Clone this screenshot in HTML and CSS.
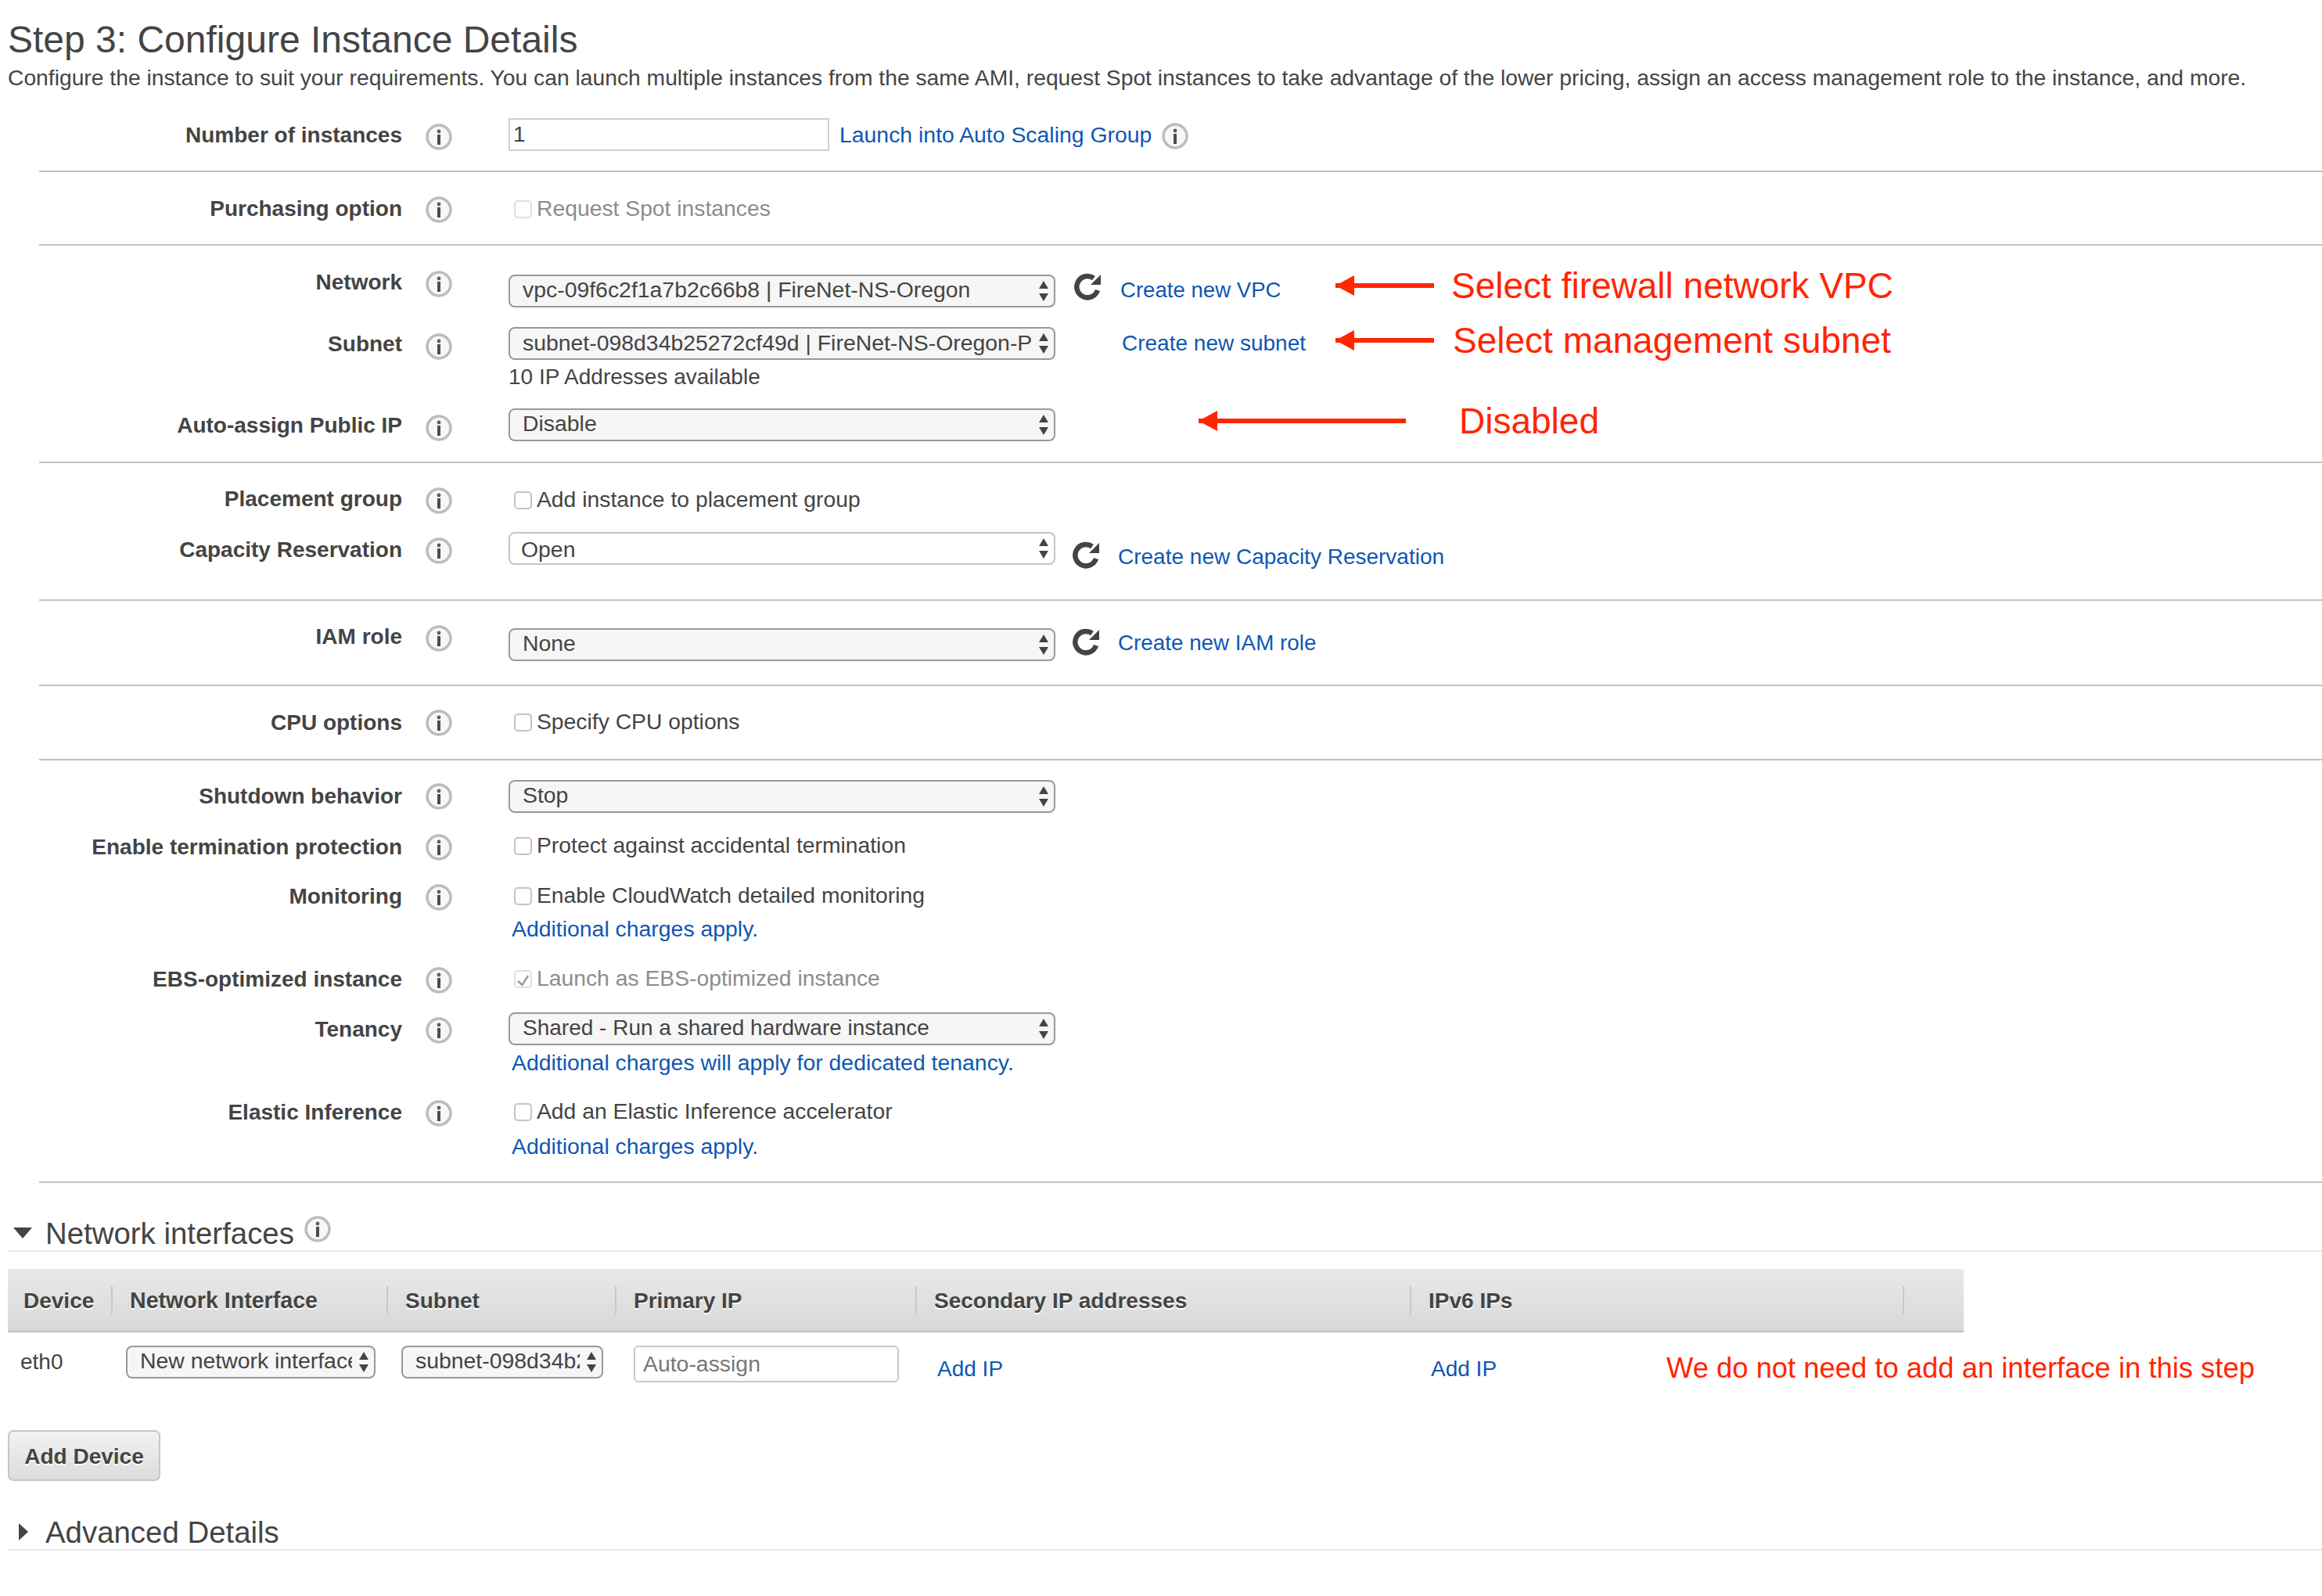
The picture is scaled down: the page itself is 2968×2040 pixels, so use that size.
FILE: index.html
```html
<!DOCTYPE html>
<html>
  <head>
    <title>Step 3: Configure Instance Details</title>
    <link rel="stylesheet" href="styles.css">
  </head>
  <body>
    <svg class="defs" width="0" height="0">
      <symbol id="info" viewBox="0 0 34 34">
        <circle cx="17" cy="17" r="15" fill="#f7f7f7" stroke="#bcbcbc" stroke-width="3.5"/>
        <circle cx="17" cy="10" r="2.4" fill="#5c5c5c"/>
        <rect x="15" y="14" width="4" height="13" fill="#4c4c4c"/>
      </symbol>
      <symbol id="refresh" viewBox="0 0 36 36">
        <path d="M31 22A13.7 13.7 0 1 1 26 6.500" fill="none" stroke="#444" stroke-width="6.500"/>
        <path d="M35 2V15H22z" fill="#444"/>
      </symbol>
    </svg>

    <div id="page">
      <header class="head">
        <h1>Step 3: Configure Instance Details</h1>
        <p>Configure the instance to suit your requirements. You can launch multiple instances from the same AMI, request Spot instances to take advantage of the lower pricing, assign an access management role to the instance, and more.</p>
      </header>

      <section class="group">
        <div class="row row-number">
          <label>Number of instances</label>
          <svg class="info"><use href="#info"/></svg>
          <div class="ctl">
            <div class="line">
              <input class="num" type="text" value="1">
              <a class="asg" href="#">Launch into Auto Scaling Group</a>
              <svg class="info asg-info"><use href="#info"/></svg>
            </div>
          </div>
        </div>
      </section>

      <section class="group">
        <div class="row row-purchase">
          <label>Purchasing option</label>
          <svg class="info"><use href="#info"/></svg>
          <div class="ctl">
            <div class="check off"><span class="box"></span>Request Spot instances</div>
          </div>
        </div>
      </section>

      <section class="group">
        <div class="row row-network">
          <label>Network</label>
          <svg class="info"><use href="#info"/></svg>
          <div class="ctl">
            <div class="line">
              <div class="select dark"><select><option>vpc-09f6c2f1a7b2c66b8 | FireNet-NS-Oregon</option></select></div>
              <svg class="refresh ref-vpc"><use href="#refresh"/></svg>
              <a class="link-vpc" href="#">Create new VPC</a>
            </div>
          </div>
        </div>
        <div class="row row-subnet">
          <label>Subnet</label>
          <svg class="info"><use href="#info"/></svg>
          <div class="ctl">
            <div class="line">
              <div class="select dark"><select><option>subnet-098d34b25272cf49d | FireNet-NS-Oregon-Public-1</option></select></div>
              <a class="link-subnet" href="#">Create new subnet</a>
            </div>
            <div class="avail">10 IP Addresses available</div>
          </div>
        </div>
        <div class="row row-auto">
          <label>Auto-assign Public IP</label>
          <svg class="info"><use href="#info"/></svg>
          <div class="ctl">
            <div class="select dark"><select><option>Disable</option></select></div>
          </div>
        </div>
      </section>

      <section class="group">
        <div class="row row-placement">
          <label>Placement group</label>
          <svg class="info"><use href="#info"/></svg>
          <div class="ctl">
            <div class="check"><span class="box"></span>Add instance to placement group</div>
          </div>
        </div>
        <div class="row row-capacity">
          <label>Capacity Reservation</label>
          <svg class="info"><use href="#info"/></svg>
          <div class="ctl">
            <div class="line">
              <div class="select light"><select><option>Open</option></select></div>
              <svg class="refresh ref-cap"><use href="#refresh"/></svg>
              <a class="link-cap" href="#">Create new Capacity Reservation</a>
            </div>
          </div>
        </div>
      </section>

      <section class="group">
        <div class="row row-iam">
          <label>IAM role</label>
          <svg class="info"><use href="#info"/></svg>
          <div class="ctl">
            <div class="line">
              <div class="select dark"><select><option>None</option></select></div>
              <svg class="refresh ref-iam"><use href="#refresh"/></svg>
              <a class="link-iam" href="#">Create new IAM role</a>
            </div>
          </div>
        </div>
      </section>

      <section class="group">
        <div class="row row-cpu">
          <label>CPU options</label>
          <svg class="info"><use href="#info"/></svg>
          <div class="ctl">
            <div class="check"><span class="box"></span>Specify CPU options</div>
          </div>
        </div>
      </section>

      <section class="group">
        <div class="row row-shutdown">
          <label>Shutdown behavior</label>
          <svg class="info"><use href="#info"/></svg>
          <div class="ctl">
            <div class="select dark"><select><option>Stop</option></select></div>
          </div>
        </div>
        <div class="row row-protect">
          <label>Enable termination protection</label>
          <svg class="info"><use href="#info"/></svg>
          <div class="ctl">
            <div class="check"><span class="box"></span>Protect against accidental termination</div>
          </div>
        </div>
        <div class="row row-monitor">
          <label>Monitoring</label>
          <svg class="info"><use href="#info"/></svg>
          <div class="ctl">
            <div class="check"><span class="box"></span>Enable CloudWatch detailed monitoring</div>
            <a class="note note-monitor" href="#">Additional charges apply.</a>
          </div>
        </div>
        <div class="row row-ebs">
          <label>EBS-optimized instance</label>
          <svg class="info"><use href="#info"/></svg>
          <div class="ctl">
            <div class="check off">
              <span class="box"><svg width="19" height="19" viewBox="0 0 19 19"><path d="M3 12L8.500 17L16 5" fill="none" stroke="#999" stroke-width="2.400"/></svg></span>Launch as EBS-optimized instance
            </div>
          </div>
        </div>
        <div class="row row-tenancy">
          <label>Tenancy</label>
          <svg class="info"><use href="#info"/></svg>
          <div class="ctl">
            <div class="select dark"><select><option>Shared - Run a shared hardware instance</option></select></div>
            <a class="note note-tenancy" href="#">Additional charges will apply for dedicated tenancy.</a>
          </div>
        </div>
        <div class="row row-elastic">
          <label>Elastic Inference</label>
          <svg class="info"><use href="#info"/></svg>
          <div class="ctl">
            <div class="check"><span class="box"></span>Add an Elastic Inference accelerator</div>
            <a class="note note-elastic" href="#">Additional charges apply.</a>
          </div>
        </div>
      </section>

      <h2 class="sec sec-net">
        <span class="tri-down"></span>Network interfaces
        <svg class="info sec-info"><use href="#info"/></svg>
      </h2>

      <div class="ni-head">
        <div>Device</div>
        <div>Network Interface</div>
        <div>Subnet</div>
        <div>Primary IP</div>
        <div>Secondary IP addresses</div>
        <div>IPv6 IPs</div>
        <div></div>
      </div>
      <div class="ni-row">
        <div class="eth">eth0</div>
        <div class="ni-sel"><div class="select dark sel-ni"><select><option>New network interface</option></select></div></div>
        <div class="ni-sel"><div class="select dark sel-sub"><select><option>subnet-098d34b25272cf49d</option></select></div></div>
        <div class="ni-ip"><input class="auto" type="text" placeholder="Auto-assign"></div>
        <div class="ni-add"><a href="#">Add IP</a></div>
        <div class="ni-add2"><a href="#">Add IP</a></div>
      </div>

      <button class="add">Add Device</button>

      <h2 class="sec sec-adv"><span class="tri-right"></span>Advanced Details</h2>

      <!-- red notes drawn on top of the form -->
      <div class="arrow a-vpc"></div>
      <div class="note-red n-vpc">Select firewall network VPC</div>
      <div class="arrow a-sub"></div>
      <div class="note-red n-sub">Select management subnet</div>
      <div class="arrow a-auto"></div>
      <div class="note-red n-auto">Disabled</div>
      <div class="note-red n-iface">We do not need to add an interface in this step</div>
    </div>
  </body>
</html>
```

FILE: styles.css
```css
html, body {
  margin: 0;
  padding: 0;
  background: #fff;
}

body {
  color: #444;
  font-family: "Liberation Sans", Arial, sans-serif;
  font-size: 28px;
}

a {
  color: #0f57b3;
  text-decoration: none;
  line-height: 34px;
}

.defs {
  position: absolute;
}

#page {
  position: relative;
  height: 2040px;
  overflow: hidden;
}

.head {
  height: 134px;
  padding-left: 10px;
  box-sizing: border-box;
}

h1 {
  margin: 0;
  padding-top: 24px;
  font-size: 48px;
  font-weight: normal;
  line-height: 54px;
}

.head p {
  margin: 0;
  padding-top: 5px;
  font-size: 28.25px;
  line-height: 32px;
  white-space: nowrap;
}

/* form */

.group {
  margin-left: 50px;
  border-bottom: 2px solid #c2c2c2;
}

.row {
  display: grid;
  grid-template-columns: 464px 34px 1fr;
  column-gap: 30px;
  align-items: start;
  --lt: 0px;
  --it: 0px;
  --ct: 0px;
}

.row > label {
  margin-top: var(--lt);
  font-weight: bold;
  line-height: 34px;
  text-align: right;
}

.row > .info {
  margin-top: var(--it);
}

.ctl {
  margin-top: var(--ct);
  margin-left: 42px;
}

.info {
  display: block;
  flex: none;
  width: 34px;
  height: 34px;
}

.refresh {
  display: block;
  flex: none;
  width: 36px;
  height: 36px;
}

.line {
  display: flex;
  align-items: flex-start;
}

.row-number { height: 84px; --lt: 22px; --it: 24px; --ct: 17px; }
.row-purchase { height: 92px; --lt: 30px; --it: 31px; --ct: 29px; }
.row-network { height: 86px; --lt: 30px; --it: 32px; --ct: 37px; }
.row-subnet { height: 110px; --lt: 23px; --it: 26px; --ct: 18px; }
.row-auto { height: 80px; --lt: 17px; --it: 20px; --ct: 12px; }
.row-placement { height: 78px; --lt: 29px; --it: 31px; --ct: 29px; }
.row-capacity { height: 96px; --lt: 16px; --it: 17px; --ct: 10px; }
.row-iam { height: 107px; --lt: 29px; --it: 31px; --ct: 35px; }
.row-cpu { height: 93px; --lt: 30px; --it: 30px; --ct: 28px; }
.row-shutdown { height: 88px; --lt: 29px; --it: 29px; --ct: 25px; }
.row-protect { height: 60px; --lt: 6px; --it: 6px; --ct: 3px; }
.row-monitor { height: 110px; --lt: 9px; --it: 10px; --ct: 7px; }
.row-ebs { height: 60px; --lt: 5px; --it: 6px; --ct: 3px; }
.row-tenancy { height: 110px; --lt: 9px; --it: 10px; --ct: 4px; }
.row-elastic { height: 110px; --lt: 5px; --it: 6px; --ct: 3px; }

.num {
  box-sizing: border-box;
  width: 410px;
  height: 42px;
  padding: 0 4px;
  border: 2px solid #d0d0d0;
  color: #444;
  font: 28px "Liberation Sans", Arial, sans-serif;
}

.asg { margin: 4px 0 0 13px; font-size: 28.4px; }
.asg-info { margin: 6px 0 0 13px; }

.check {
  display: flex;
  align-items: center;
  font-size: 28.3px;
  line-height: 34px;
}

.check .box {
  box-sizing: border-box;
  display: block;
  flex: none;
  width: 23px;
  height: 23px;
  margin: 2px 6px 0 7px;
  border: 2px solid #c4c4c4;
  border-radius: 5px;
  background: #fff;
}

.check.off {
  color: #8c8c8c;
}

.check.off .box {
  border-color: #e0e0e0;
}

.check .box svg {
  display: block;
}

.select {
  position: relative;
  flex: none;
  box-sizing: border-box;
  width: 699px;
  height: 42px;
  border: 2px solid #999;
  border-radius: 8px;
  background: #f6f6f6;
}

.select.light {
  border-color: #c4c4c4;
  background: #fff;
}

.select select {
  display: block;
  box-sizing: border-box;
  width: 100%;
  height: 100%;
  padding: 0 28px 4px 16px;
  border: 0;
  outline: 0;
  background: transparent;
  color: #444;
  font: 28.4px "Liberation Sans", Arial, sans-serif;
  appearance: none;
  -webkit-appearance: none;
}

.select.light select {
  padding: 2px 28px 0 14px;
}

.row-subnet .select select {
  padding-bottom: 2px;
}

.row-tenancy .select select {
  font-size: 28px;
}

/* up and down arrows of the select */
.select::before,
.select::after {
  content: "";
  position: absolute;
  right: 7px;
  border-left: 6px solid transparent;
  border-right: 6px solid transparent;
  pointer-events: none;
}

.select::before {
  top: 6px;
  border-bottom: 10px solid #444;
}

.select::after {
  bottom: 6px;
  border-top: 10px solid #444;
}

.ref-vpc { margin: -2px 0 0 23px; }
.link-vpc { margin: 3px 0 0 24px; font-size: 27.6px; }
.link-subnet { margin: 4px 0 0 85px; }
.ref-cap { margin: 12px 0 0 21px; }
.link-cap { margin: 15px 0 0 23px; }
.ref-iam { margin: 0 0 0 21px; }
.link-iam { margin: 2px 0 0 23px; font-size: 27.8px; }

.avail {
  margin-top: 5px;
  line-height: 34px;
}

.note {
  display: block;
  margin-left: 4px;
  font-size: 28.4px;
}

.note-monitor { margin-top: 9px; }
.note-tenancy { margin-top: 5px; }
.note-elastic { margin-top: 11px; }

/* network interfaces */

.sec {
  display: flex;
  margin: 0 0 0 10px;
  border-bottom: 2px solid #e8e8e8;
  font-size: 38.4px;
  font-weight: normal;
  line-height: 42px;
}

.sec-net { padding-top: 44px; }
.sec-adv { padding-top: 45px; }

.tri-down {
  flex: none;
  width: 0;
  height: 0;
  margin: 13px 17px 0 7px;
  border-left: 12px solid transparent;
  border-right: 12px solid transparent;
  border-top: 14px solid #444;
}

.tri-right {
  flex: none;
  width: 0;
  height: 0;
  margin: 9px 22px 0 14px;
  border-top: 11px solid transparent;
  border-bottom: 11px solid transparent;
  border-left: 12px solid #444;
}

.sec-info { margin: -3px 0 0 13px; width: 34px; height: 36px; }

.ni-head,
.ni-row {
  display: grid;
  grid-template-columns: 134px 352px 292px 384px 632px 630px 76px;
  width: 2500px;
  margin-left: 10px;
}

.ni-head {
  align-items: center;
  box-sizing: border-box;
  height: 81px;
  margin-top: 22px;
  border-bottom: 2px solid #c0c0c0;
  background: linear-gradient(#e9e9e9, #d8d8d8);
  font-weight: bold;
  text-shadow: 0 2px 0 #fff;
}

.ni-head > div {
  box-sizing: border-box;
  height: 36px;
  padding-left: 22px;
  border-right: 2px solid #c8c8c8;
  line-height: 37px;
  white-space: nowrap;
}

.ni-head > div:first-child {
  padding-left: 20px;
}

.ni-head > div:nth-child(2) {
  font-size: 28.6px;
}

.ni-head > div:last-child {
  border-right: 0;
}

.ni-row {
  height: 125px;
}

.eth { padding: 21px 0 0 16px; line-height: 34px; }
.ni-sel { padding: 17px 0 0 17px; }
.ni-ip { padding: 17px 0 0 22px; }
.ni-add { padding: 30px 0 0 26px; }
.ni-add2 { padding: 30px 0 0 25px; }

.sel-ni { width: 319px; }
.sel-sub { width: 258px; }

.auto {
  box-sizing: border-box;
  width: 339px;
  height: 47px;
  padding: 0 10px;
  border: 2px solid #c8c8c8;
  border-radius: 6px;
  font: 28.4px "Liberation Sans", Arial, sans-serif;
}

.auto::placeholder {
  color: #777;
  opacity: 1;
}

.add {
  display: block;
  box-sizing: border-box;
  width: 195px;
  height: 65px;
  margin-left: 10px;
  padding: 2px 0 0;
  border: 2px solid #c6c6c6;
  border-radius: 7px;
  background: linear-gradient(#f2f2f2, #dcdcdc);
  color: #444;
  font: bold 28px "Liberation Sans", Arial, sans-serif;
  text-shadow: 0 2px 0 #fff;
}

/* annotations on top */

.note-red {
  position: absolute;
  color: #ff2600;
  font-size: 46px;
  line-height: 56px;
  white-space: nowrap;
}

.n-vpc { left: 1855px; top: 337px; }
.n-sub { left: 1857px; top: 407px; }
.n-auto { left: 1865px; top: 510px; }
.n-iface { left: 2130px; top: 1721px; font-size: 36.4px; }

.arrow {
  position: absolute;
  height: 6px;
  background: #ff2600;
}

.arrow::before {
  content: "";
  position: absolute;
  left: 0;
  top: -10px;
  border-top: 13px solid transparent;
  border-bottom: 13px solid transparent;
  border-right: 24px solid #ff2600;
}

.a-vpc { left: 1707px; top: 362px; width: 126px; }
.a-sub { left: 1707px; top: 432px; width: 126px; }
.a-auto { left: 1532px; top: 535px; width: 265px; }
```
